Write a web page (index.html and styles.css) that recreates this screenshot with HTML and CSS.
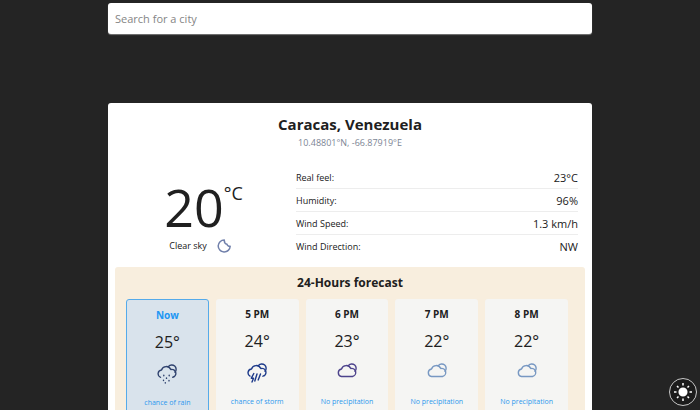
FILE: index.html
```html
<!DOCTYPE html>
<html lang="en">
<head>
<meta charset="utf-8">
<meta name="viewport" content="width=device-width, initial-scale=1">
<title>Weather</title>
<link rel="stylesheet" href="styles.css">
</head>
<body>
<svg class="sprite" aria-hidden="true">
  <symbol id="cloud" viewBox="0 0 20 20">
    <path d="M4.500 13.500A3.800 3.800 0 0 1 4.500 6 5 5 0 0 1 13.800 5.500 4 4 0 0 1 15.500 13.500z"/>
    <path d="M11.500 2.400A4.300 4.300 0 1 1 18 8.300"/>
  </symbol>
  <symbol id="rain" viewBox="0 0 20 20">
    <path d="M3.500 13.300A3.800 3.800 0 0 1 4.500 6 5 5 0 0 1 13.800 5.500 4 4 0 0 1 15.800 13.300"/>
    <path d="M11.500 2.400A4.300 4.300 0 1 1 18 8.300"/>
    <path d="M6.800 11.300v.4M12.200 11.300v.4M9.500 14v.4M6.500 16.200v.4M12 16.500v.4M8.300 18.800v.2"/>
  </symbol>
  <symbol id="storm" viewBox="0 0 20 20">
    <path d="M3 13.100A3.800 3.800 0 0 1 4.500 6 5 5 0 0 1 13.800 5.500 4 4 0 0 1 16 13.200"/>
    <path d="M11.500 2.400A4.300 4.300 0 1 1 18 8.300"/>
    <path d="M6.800 10.500l-2.500 4.700h2.200l-1.500 3.800M10 11l-2.200 7M13.500 11l-2.300 6"/>
  </symbol>
</svg>

<main class="page">
  <form class="search">
    <input class="search-input" type="search" aria-label="Search for a city" placeholder="Search for a city">
  </form>

  <article class="weather">
    <header class="place">
      <h1 class="place-name">Caracas, Venezuela</h1>
      <p class="place-coords">10.48801°N, -66.87919°E</p>
    </header>

    <section class="current">
      <div class="summary">
        <p class="temperature">20<span class="unit">°C</span></p>
        <p class="condition">Clear sky
          <svg class="moon" viewBox="0 0 16 16" aria-hidden="true"><path d="M8.300 2A6 6 0 1 0 14.200 8.300C12.800 8.600 11.200 7.800 11 6.200 9.300 5.800 8.200 4 8.300 2z"/></svg>
        </p>
      </div>
      <dl class="details">
        <div class="detail"><dt>Real feel:</dt><dd>23°C</dd></div>
        <div class="detail"><dt>Humidity:</dt><dd>96%</dd></div>
        <div class="detail"><dt>Wind Speed:</dt><dd>1.3 km/h</dd></div>
        <div class="detail"><dt>Wind Direction:</dt><dd>NW</dd></div>
      </dl>
    </section>

    <section class="forecast">
      <h2 class="forecast-title">24-Hours forecast</h2>
      <ul class="hours">
        <li class="hour hour-now"><h3 class="time">Now</h3><p class="degrees">25°</p><svg class="icon icon-rain" aria-hidden="true"><use href="#rain"/></svg><p class="chance">chance of rain</p></li>
        <li class="hour"><h3 class="time">5 PM</h3><p class="degrees">24°</p><svg class="icon icon-storm" aria-hidden="true"><use href="#storm"/></svg><p class="chance">chance of storm</p></li>
        <li class="hour"><h3 class="time">6 PM</h3><p class="degrees">23°</p><svg class="icon icon-dusk" aria-hidden="true"><use href="#cloud"/></svg><p class="chance">No precipitation</p></li>
        <li class="hour"><h3 class="time">7 PM</h3><p class="degrees">22°</p><svg class="icon icon-cloud" aria-hidden="true"><use href="#cloud"/></svg><p class="chance">No precipitation</p></li>
        <li class="hour"><h3 class="time">8 PM</h3><p class="degrees">22°</p><svg class="icon icon-cloud" aria-hidden="true"><use href="#cloud"/></svg><p class="chance">No precipitation</p></li>
      </ul>
    </section>
  </article>
</main>

<button class="theme" type="button" aria-label="Switch theme">
  <svg class="sun" viewBox="0 0 20 20" aria-hidden="true">
    <circle cx="10" cy="10" r="3.800"/>
    <path d="M10 1v2.500M10 16.500v2.500M1 10h2.500M16.500 10h2.500M4 4l1.500 1.500M14.500 14.500l1.500 1.500M4 16l1.500-1.500M14.500 5.500l1.500-1.500"/>
  </svg>
</button>
</body>
</html>
```
FILE: styles.css
```css
* {
  box-sizing: border-box;
  margin: 0;
  padding: 0;
}

body {
  height: 100vh;
  overflow: hidden;
  background: #242424;
  color: #202020;
  font-family: "Open Sans", "Noto Sans", sans-serif;
  font-size: 9px;
}

.sprite {
  display: none;
}

.page {
  width: 484px;
  max-width: 100%;
  margin: 0 auto;
  padding-top: 3px;
}

.search-input {
  display: block;
  width: 100%;
  height: 31px;
  padding: 0 7px;
  border: 0;
  border-radius: 3px;
  background: #fff;
  box-shadow: 0 1px 1px #777;
  font: inherit;
  font-size: 11px;
  appearance: none;
}

.search-input::placeholder {
  color: #858585;
}

.weather {
  margin-top: 69px;
  padding: 10px 7px;
  border-radius: 3px;
  background: #fff;
}

.place {
  text-align: center;
}

.place-name {
  font-size: 15px;
  line-height: 22px;
  font-weight: 700;
}

.place-coords {
  color: #7c8594;
  line-height: 15px;
}

.current {
  display: grid;
  grid-template-columns: 181px 1fr;
  padding: 16px 7px 9px 0;
}

.summary {
  padding: 15px 4px 0 0;
}

.temperature {
  display: flex;
  justify-content: center;
  align-items: flex-start;
  font-size: 52px;
  line-height: 52px;
}

.unit {
  font-size: 18px;
  line-height: 24px;
}

.condition {
  display: flex;
  justify-content: center;
  align-items: center;
  gap: 9px;
  margin-top: 3px;
  padding-right: 6px;
  line-height: 20px;
}

.moon {
  width: 16px;
  height: 16px;
  fill: none;
  stroke: #7180ab;
  stroke-width: 1.500;
  stroke-linejoin: round;
}

.detail {
  display: flex;
  justify-content: space-between;
  align-items: center;
  height: 23px;
  border-bottom: 1px solid #ededed;
}

.detail:last-child {
  border-bottom: 0;
}

.detail dd {
  font-size: 11px;
}

.forecast {
  padding: 6px 17px 12px 11px;
  border-radius: 3px;
  background: #f8eede;
}

.forecast-title {
  margin-right: -6px;
  font-size: 12px;
  font-weight: 700;
  line-height: 20px;
  text-align: center;
}

.hours {
  display: grid;
  grid-template-columns: repeat(5, 1fr);
  gap: 7px;
  margin-top: 6px;
  list-style: none;
}

.hour {
  display: flex;
  flex-direction: column;
  align-items: center;
  height: 124px;
  padding-top: 7px;
  border-radius: 3px;
  background: #f5f5f3;
}

.hour-now {
  border: 1px solid #55aaea;
  background: #d9e3ec;
}

.hour-now .time {
  color: #2196f3;
}

.time {
  font-size: 10px;
  line-height: 16px;
}

.degrees {
  margin-top: 8px;
  font-size: 16px;
  line-height: 22px;
}

.icon {
  width: 20px;
  height: 20px;
  margin-top: 11px;
  fill: none;
  stroke: currentColor;
  stroke-width: 1.400;
  stroke-linecap: round;
  stroke-linejoin: round;
}

.icon-rain {
  color: #2f426e;
}

.icon-storm {
  color: #1d3a8a;
}

.icon-dusk {
  color: #4d438c;
}

.icon-cloud {
  color: #7898c2;
}

.chance {
  margin-top: 13px;
  color: #2c98ee;
  font-size: 7px;
  line-height: 12px;
}

.theme {
  position: fixed;
  right: 3px;
  bottom: 4px;
  display: grid;
  place-items: center;
  width: 28px;
  height: 28px;
  border: 1px solid #c8c8c8;
  border-radius: 50%;
  background: #1b1b1b;
}

.sun {
  width: 20px;
  height: 20px;
  fill: #fff;
  stroke: #fff;
  stroke-width: 1.500;
}
```
